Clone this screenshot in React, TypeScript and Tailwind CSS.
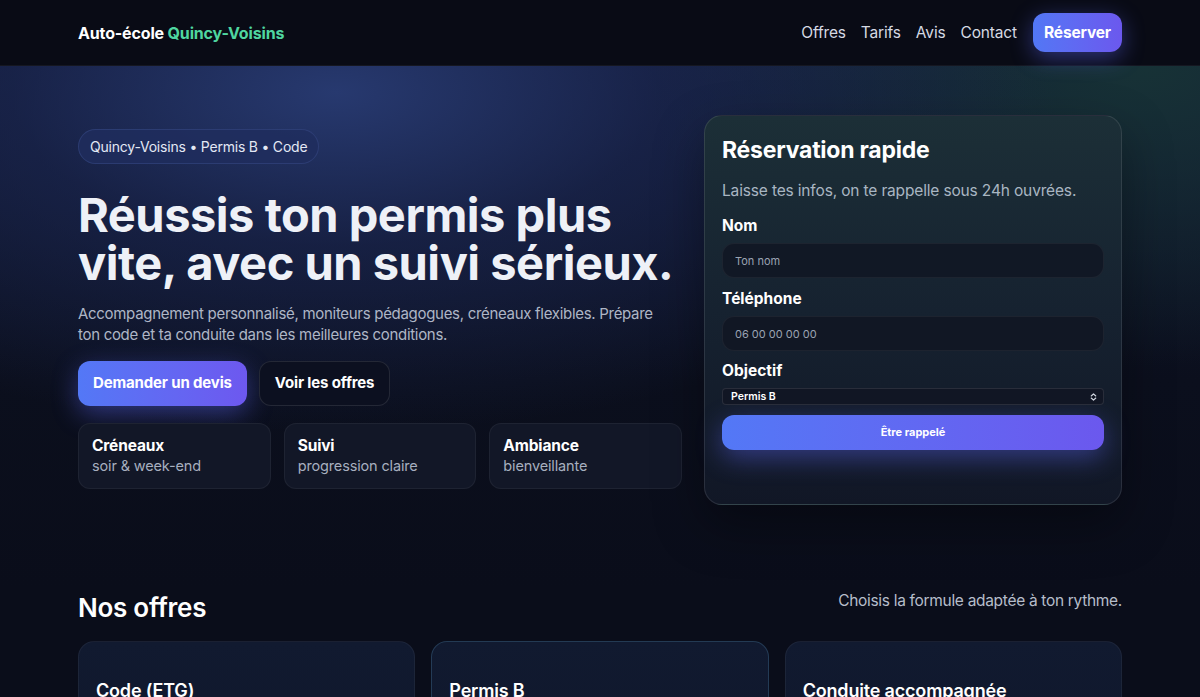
import React from 'react';

const navLinks = ['Offres', 'Tarifs', 'Avis', 'Contact'];

const perks = [
  { title: 'Créneaux', sub: 'soir & week-end' },
  { title: 'Suivi', sub: 'progression claire' },
  { title: 'Ambiance', sub: 'bienveillante' },
];

const offers = [
  { title: 'Code (ETG)', featured: false },
  { title: 'Permis B', featured: true },
  { title: 'Conduite accompagnée', featured: false },
];

const Header: React.FC = () => (
  <header className="bg-[#090b15] border-b border-white/5">
    <div className="h-[65px] px-[78px] flex items-center justify-between">
      <a href="#" className="text-[16px] font-bold text-white tracking-[-0.01em]">
        Auto-école <span className="text-[#4fd6a0]">Quincy-Voisins</span>
      </a>
      <nav className="flex items-center gap-[15px] text-[15.5px] text-[#d6dae3] tracking-[-0.01em]">
        {navLinks.map((l) => (
          <a key={l} href="#" className="hover:text-white">
            {l}
          </a>
        ))}
        <a
          href="#"
          className="ml-[1px] h-[39px] px-[11px] flex items-center rounded-xl bg-gradient-to-r from-[#5277f5] to-[#6b58ee] text-white font-bold shadow-[0_6px_22px_rgba(90,100,240,0.45)]"
        >
          Réserver
        </a>
      </nav>
    </div>
  </header>
);

const QuickBooking: React.FC = () => (
  <div className="rounded-[18px] border border-white/10 bg-gradient-to-b from-[#1c2f37] via-[#162230] to-[#111726] px-[17px] pt-[20px] pb-[54px] shadow-[0_20px_50px_rgba(0,0,0,0.35)]">
    <h2 className="text-[23px] font-bold text-white leading-tight tracking-[-0.01em]">Réservation rapide</h2>
    <p className="mt-[14px] text-[15.5px] text-[#a9b6c2] tracking-[-0.01em]">
      Laisse tes infos, on te rappelle sous 24h ouvrées.
    </p>

    <label className="block mt-[14px] text-[15.5px] leading-[20px] font-bold text-white">Nom</label>
    <input
      placeholder="Ton nom"
      className="mt-[7px] w-full h-[35px] rounded-xl bg-[#111825] border border-white/5 px-[12px] text-[11px] text-white placeholder:text-[#9aa3b2] outline-none"
    />

    <label className="block mt-[11px] text-[15.5px] leading-[20px] font-bold text-white">Téléphone</label>
    <input
      placeholder="06 00 00 00 00"
      className="mt-[7px] w-full h-[35px] rounded-xl bg-[#111724] border border-white/5 px-[12px] text-[11px] text-white placeholder:text-[#9aa3b2] outline-none"
    />

    <label className="block mt-[10px] text-[15.5px] leading-[20px] font-bold text-white">Objectif</label>
    <div className="mt-[7px] relative">
      <select className="appearance-none block w-full h-[17px] rounded-[4px] bg-[#111624] border border-white/10 pl-[8px] text-[10.5px] font-semibold text-white outline-none">
        <option>Permis B</option>
        <option>Code (ETG)</option>
        <option>Conduite accompagnée</option>
      </select>
      <svg
        className="absolute right-[6px] top-1/2 -translate-y-1/2 w-[9px] h-[9px] text-[#cfd4de] pointer-events-none"
        viewBox="0 0 10 10"
        fill="none"
        stroke="currentColor"
        strokeWidth="1.4"
        strokeLinecap="round"
        strokeLinejoin="round"
      >
        <path d="M2.5 3.8 5 1.5l2.5 2.3M2.5 6.2 5 8.5l2.5-2.3" />
      </svg>
    </div>

    <button
      type="button"
      className="mt-[10px] w-full h-[35px] rounded-xl bg-gradient-to-r from-[#5378f6] to-[#6b58ee] text-[11px] font-bold text-white shadow-[0_8px_26px_rgba(90,100,240,0.45)]"
    >
      Être rappelé
    </button>
  </div>
);

const Hero: React.FC = () => (
  <section className="bg-[radial-gradient(ellipse_720px_340px_at_28%_5%,#27396f_0%,rgba(28,40,85,0.6)_45%,rgba(11,14,28,0)_100%),radial-gradient(ellipse_500px_300px_at_95%_0%,#173236_0%,rgba(11,14,28,0)_100%),linear-gradient(to_bottom,#121a35_0%,#0b0f1d_60%,#0a0d1a_100%)]">
    <div className="px-[78px] pt-[49px] pb-[84px] grid grid-cols-[604px_1fr] gap-[22px]">
      <div className="pt-[14px]">
        <span className="inline-flex items-center h-[35px] px-[11px] rounded-full bg-[#1f2d5e]/80 border border-[#3a4c8a]/50 text-[14px] text-[#e3e8f4] tracking-[-0.015em]">
          Quincy-Voisins • Permis B • Code
        </span>

        <h1 className="mt-[27px] text-[47px] leading-[48px] font-bold text-[#eef1f7] tracking-[-0.01em]">
          Réussis ton permis plus vite, avec un suivi sérieux.
        </h1>

        <p className="mt-[16px] max-w-[592px] text-[15px] leading-[21px] text-[#aeb6c6] tracking-[-0.02em]">
          Accompagnement personnalisé, moniteurs pédagogues, créneaux flexibles. Prépare ton code et ta conduite dans
          les meilleures conditions.
        </p>

        <div className="mt-[16px] flex gap-[12px]">
          <a
            href="#"
            className="h-[45px] px-[15px] flex items-center rounded-xl bg-gradient-to-r from-[#5378f6] to-[#6d58ef] text-[15px] font-bold text-white tracking-[-0.01em] shadow-[0_8px_26px_rgba(90,100,240,0.45)]"
          >
            Demander un devis
          </a>
          <a
            href="#"
            className="h-[45px] px-[15px] flex items-center rounded-xl bg-[#0c1020] border border-white/10 text-[15px] font-bold text-white tracking-[-0.01em]"
          >
            Voir les offres
          </a>
        </div>

        <div className="mt-[17px] grid grid-cols-3 gap-[13px]">
          {perks.map((p) => (
            <div key={p.title} className="h-[66px] rounded-xl bg-[#121727] border border-white/5 px-[13px] pt-[12px]">
              <div className="text-[15.5px] font-bold text-white leading-[20px] tracking-[-0.01em]">{p.title}</div>
              <div className="text-[14.5px] text-[#a7afbf] leading-[20px] tracking-[-0.01em]">{p.sub}</div>
            </div>
          ))}
        </div>
      </div>

      <QuickBooking />
    </div>
  </section>
);

const Offers: React.FC = () => (
  <section className="bg-[#0a0d1a] pb-[120px]">
    <div className="px-[78px]">
      <div className="flex items-end justify-between">
        <h2 className="text-[26px] font-semibold text-white leading-none tracking-[-0.01em]">Nos offres</h2>
        <p className="text-[15.5px] text-[#b6bdca] pb-[9px] tracking-[-0.02em]">Choisis la formule adaptée à ton rythme.</p>
      </div>
      <div className="mt-[20px] grid grid-cols-3 gap-[16px]">
        {offers.map((o) => (
          <div
            key={o.title}
            className={`h-[240px] rounded-2xl bg-gradient-to-b from-[#111a30] to-[#0e1427] border px-[17px] pt-[35px] ${
              o.featured ? 'border-[#2c4a66]/70' : 'border-white/5'
            }`}
          >
            <h3 className="text-[18px] font-semibold text-white tracking-[-0.01em]">{o.title}</h3>
          </div>
        ))}
      </div>
    </div>
  </section>
);

export default function App() {
  return (
    <div className="min-h-screen bg-[#0a0d1a] font-['Inter','Noto_Sans',sans-serif] antialiased">
      <Header />
      <Hero />
      <Offers />
    </div>
  );
}
